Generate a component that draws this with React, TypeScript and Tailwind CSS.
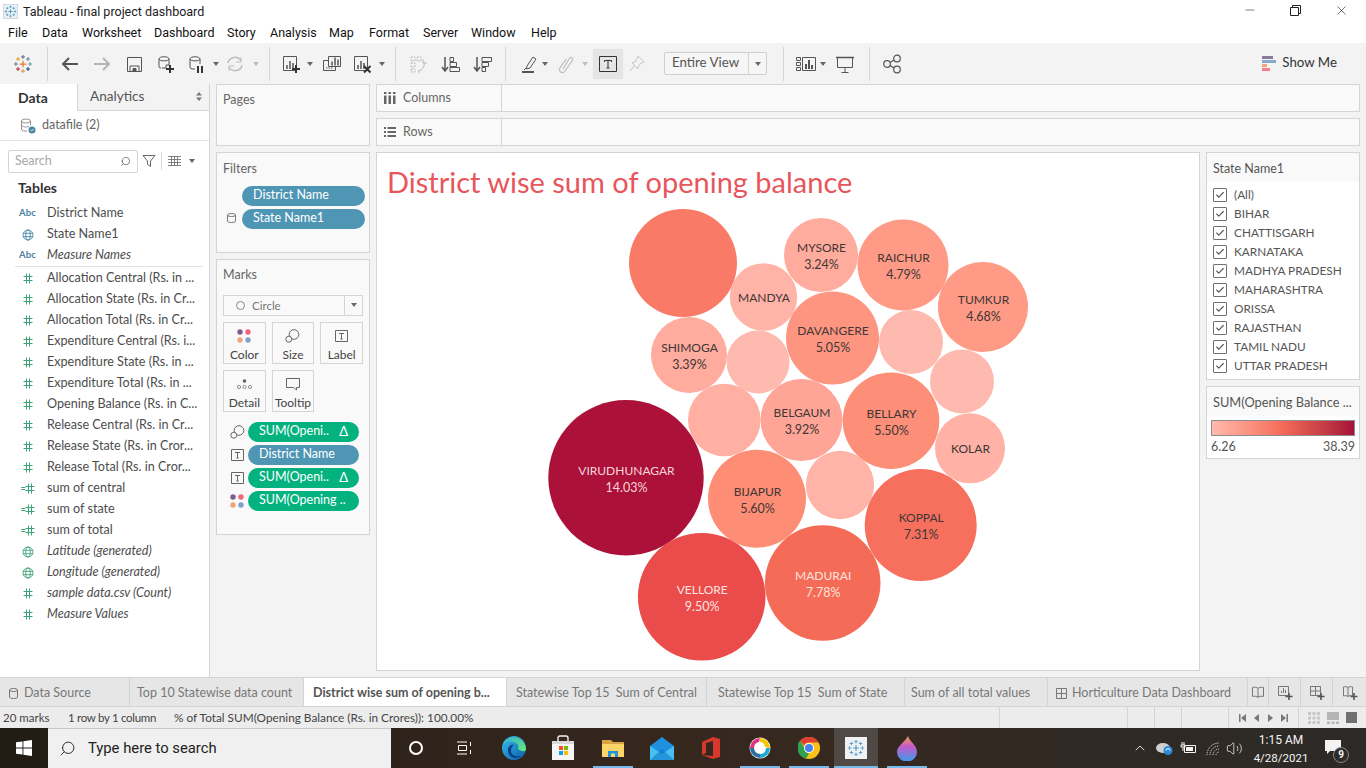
import type { ReactNode } from 'react';
import { Check, ChevronUp, Search, Volume2, X, Minus } from 'lucide-react';

type Bubble = { cx: number; cy: number; r: number; fill: string; name?: string; pct?: string; ink?: string };

const bubbles: Bubble[] = [
  { cx: 683, cy: 263, r: 54, fill: '#f97a66' },
  { cx: 821, cy: 255, r: 37, fill: '#ffab9d', name: 'MYSORE', pct: '3.24%' },
  { cx: 903, cy: 265, r: 45.5, fill: '#fe9a85', name: 'RAICHUR', pct: '4.79%' },
  { cx: 983, cy: 307, r: 45, fill: '#fe9a85', name: 'TUMKUR', pct: '4.68%' },
  { cx: 763.5, cy: 297, r: 33.7, fill: '#ffb4a7', name: 'MANDYA' },
  { cx: 832.5, cy: 338, r: 46.5, fill: '#fe9580', name: 'DAVANGERE', pct: '5.05%' },
  { cx: 911, cy: 342, r: 32, fill: '#ffbaaf' },
  { cx: 689, cy: 355, r: 38, fill: '#ffab9d', name: 'SHIMOGA', pct: '3.39%' },
  { cx: 758, cy: 362, r: 31.5, fill: '#ffbaaf' },
  { cx: 962, cy: 381.5, r: 32, fill: '#ffbaaf' },
  { cx: 626, cy: 477.7, r: 77.7, fill: '#ab1139', name: 'VIRUDHUNAGAR', pct: '14.03%', ink: '#f6d5da' },
  { cx: 724.3, cy: 420, r: 36.3, fill: '#ffb0a2' },
  { cx: 801.5, cy: 420, r: 41, fill: '#fea597', name: 'BELGAUM', pct: '3.92%' },
  { cx: 891, cy: 420.7, r: 48.3, fill: '#fd8e78', name: 'BELLARY', pct: '5.50%' },
  { cx: 970, cy: 448.3, r: 35, fill: '#ffb2a5', name: 'KOLAR' },
  { cx: 757, cy: 498.7, r: 49, fill: '#fd8d75', name: 'BIJAPUR', pct: '5.60%' },
  { cx: 840, cy: 485, r: 34.2, fill: '#ffb4a7' },
  { cx: 920.7, cy: 525, r: 56, fill: '#f6705d', name: 'KOPPAL', pct: '7.31%' },
  { cx: 822.7, cy: 583, r: 57.8, fill: '#f46b58', name: 'MADURAI', pct: '7.78%', ink: '#ffe3dd' },
  { cx: 701.7, cy: 596.8, r: 63.8, fill: '#e94c4a', name: 'VELLORE', pct: '9.50%', ink: '#ffe3e0' },
];

const fields: { label: string; kind: 'abc' | 'globe' | 'hash' | 'calc' | 'gglobe'; italic?: boolean; rule?: boolean }[] = [
  { label: 'District Name', kind: 'abc' },
  { label: 'State Name1', kind: 'globe' },
  { label: 'Measure Names', kind: 'abc', italic: true, rule: true },
  { label: 'Allocation Central (Rs. in ...', kind: 'hash' },
  { label: 'Allocation State (Rs. in Cr...', kind: 'hash' },
  { label: 'Allocation Total (Rs. in Cr...', kind: 'hash' },
  { label: 'Expenditure Central (Rs. i...', kind: 'hash' },
  { label: 'Expenditure State (Rs. in ...', kind: 'hash' },
  { label: 'Expenditure Total (Rs. in ...', kind: 'hash' },
  { label: 'Opening Balance (Rs. in C...', kind: 'hash' },
  { label: 'Release Central (Rs. in Cr...', kind: 'hash' },
  { label: 'Release State (Rs. in Cror...', kind: 'hash' },
  { label: 'Release Total (Rs. in Cror...', kind: 'hash' },
  { label: 'sum of central', kind: 'calc' },
  { label: 'sum of state', kind: 'calc' },
  { label: 'sum of total', kind: 'calc' },
  { label: 'Latitude (generated)', kind: 'gglobe', italic: true },
  { label: 'Longitude (generated)', kind: 'gglobe', italic: true },
  { label: 'sample data.csv (Count)', kind: 'hash', italic: true },
  { label: 'Measure Values', kind: 'hash', italic: true },
];

const states = ['(All)', 'BIHAR', 'CHATTISGARH', 'KARNATAKA', 'MADHYA PRADESH', 'MAHARASHTRA', 'ORISSA', 'RAJASTHAN', 'TAMIL NADU', 'UTTAR PRADESH'];

const menus = [
  { t: 'File', c: 'w-[34px]' },
  { t: 'Data', c: 'w-[40px]' },
  { t: 'Worksheet', c: 'w-[72px]' },
  { t: 'Dashboard', c: 'w-[73px]' },
  { t: 'Story', c: 'w-[43px]' },
  { t: 'Analysis', c: 'w-[59px]' },
  { t: 'Map', c: 'w-[40px]' },
  { t: 'Format', c: 'w-[54px]' },
  { t: 'Server', c: 'w-[48px]' },
  { t: 'Window', c: 'w-[60px]' },
  { t: 'Help', c: 'w-[40px]' },
];

function Plus({ x, y, s, c, w = 1 }: { x: number; y: number; s: number; c: string; w?: number }) {
  return <path d={`M${x - s} ${y}H${x + s}M${x} ${y - s}V${y + s}`} stroke={c} strokeWidth={w} fill="none" />;
}

function TableauMark({ size = 20, mono }: { size?: number; mono?: string }) {
  const c = (v: string) => mono ?? v;
  return (
    <svg width={size} height={size} viewBox="0 0 24 24" className="shrink-0">
      <Plus x={12} y={12} s={4} c={c('#e8762b')} w={1.5} />
      <Plus x={12} y={3.5} s={2.4} c={c('#5b6591')} w={1.2} />
      <Plus x={12} y={20.5} s={2.4} c={c('#eb912b')} w={1.2} />
      <Plus x={3.5} y={12} s={2.4} c={c('#59879b')} w={1.2} />
      <Plus x={20.5} y={12} s={2.4} c={c('#7099a6')} w={1.2} />
      <Plus x={6} y={6} s={2.4} c={c('#e8962b')} w={1.2} />
      <Plus x={18} y={6} s={2.4} c={c('#59879b')} w={1.2} />
      <Plus x={6} y={18} s={2.4} c={c('#c72035')} w={1.2} />
      <Plus x={18} y={18} s={2.4} c={c('#1f447e')} w={1.2} />
    </svg>
  );
}

function Ico({ children, className = '', w = 20, h = 20 }: { children: ReactNode; className?: string; w?: number; h?: number }) {
  return (
    <svg width={w} height={h} viewBox={`0 0 ${w} ${h}`} fill="none" stroke="currentColor" strokeWidth={1} className={`shrink-0 ${className}`}>
      {children}
    </svg>
  );
}

function Caret({ className = '', dim }: { className?: string; dim?: boolean }) {
  return (
    <svg width={6} height={4} viewBox="0 0 6 4" className={`shrink-0 ${className}`}>
      <path d="M0 0H6L3 4Z" fill={dim ? '#bdbdbd' : '#666666'} />
    </svg>
  );
}

function Sep({ className }: { className: string }) {
  return <div className={`w-px h-[34px] bg-[#d6d6d6] shrink-0 ${className}`} />;
}

function BarsGlyph({ x, y }: { x: number; y: number }) {
  return <path d={`M${x} ${y + 8}V${y + 4}M${x + 3} ${y + 8}V${y}M${x + 6} ${y + 8}V${y + 2}`} strokeWidth={1.5} />;
}

function Toolbar() {
  return (
    <div className="h-[41px] bg-[#f3f3f3] flex items-center pl-[13px] text-[#555555]">
      <TableauMark />
      <Sep className="ml-[14px]" />
      <Ico className="ml-[12px]"><path d="M18 10H3M9 4L3 10L9 16" strokeWidth={2} /></Ico>
      <Ico className="ml-[12px] text-[#b5b5b5]"><path d="M2 10H17M11 4L17 10L11 16" strokeWidth={2} /></Ico>
      <Ico className="ml-[12px]"><path d="M3.5 3.5H17.5V17.5H3.5Z" /><path d="M6 17V12H15V17" /><path d="M9 14.5H12V17H9Z" fill="currentColor" /></Ico>
      <Ico className="ml-[11px]"><path d="M4 5C4 2 14 2 14 5V11H11V14H7M4 5V13Q4 14 6 14M4 5C4 7.5 14 7.5 14 5" /><path d="M15 11V19M11 15H19" stroke="#333333" strokeWidth={2} /></Ico>
      <Ico className="ml-[11px]"><path d="M4 5C4 2 14 2 14 5V10M4 5V13Q4 15 7 15H9M4 5C4 7.5 14 7.5 14 5" /><path d="M12 12V19M16 12V19" stroke="#333333" strokeWidth={2} /></Ico>
      <Caret className="ml-[7px]" />
      <Ico className="ml-[6px] text-[#bdbdbd]"><path d="M3 9A7 7 0 0 1 16 7M17 11A7 7 0 0 1 4 13" strokeWidth={1.5} /><path d="M16 3V8H11M4 17V12H9" strokeWidth={1} /></Ico>
      <Caret className="ml-[8px]" dim />
      <Sep className="ml-[10px]" />
      <Ico className="ml-[11px]"><path d="M2.5 2.5H15.5V16.5H2.5Z" /><BarsGlyph x={6} y={7} /><path d="M15 11V19M11 15H19" stroke="#333333" strokeWidth={2} /></Ico>
      <Caret className="ml-[6px]" />
      <Ico className="ml-[9px]"><path d="M6.5 2.5H18.5V12.5H6.5Z" /><path d="M6 6.5H1.5V16.5H13.5V13" /><BarsGlyph x={10} y={3.5} /><path d="M4 14H11" strokeDasharray="1.5 1" /></Ico>
      <Ico className="ml-[10px]"><path d="M2.5 2.5H15.5V16.5H2.5Z" /><BarsGlyph x={6} y={7} /><path d="M12 12L18.5 18.5M18.5 12L12 18.5" stroke="#333333" strokeWidth={2} /></Ico>
      <Caret className="ml-[7px]" />
      <Sep className="ml-[10px]" />
      <Ico className="ml-[12px] text-[#bdbdbd]"><path d="M3 3H7V7H3ZM9 3H13V7H9ZM3 9H7V13H3ZM3 15H7V18H3ZM10 18H13" strokeDasharray="2 1" /><path d="M16 8A7 7 0 0 1 10 17M15 5V9H19" /></Ico>
      <Ico className="ml-[12px]"><path d="M5 3V16M2 13L5 17L8 13" strokeWidth={1.5} /><path d="M10 3.5H13.5V7.5H10ZM10 8.5H16.5V12.5H10ZM10 13.5H19.5V17.5H10Z" /></Ico>
      <Ico className="ml-[12px]"><path d="M5 3V16M2 13L5 17L8 13" strokeWidth={1.5} /><path d="M10 3.5H19.5V7.5H10ZM10 8.5H16.5V12.5H10ZM10 13.5H13.5V17.5H10Z" /></Ico>
      <Sep className="ml-[13px]" />
      <Ico className="ml-[12px]"><path d="M9 12L15 3L18 5L12 14L8.5 15Z" /><path d="M4 18H16" strokeWidth={2} /><path d="M8 14L6 16" /></Ico>
      <Caret className="ml-[4px]" />
      <Ico className="ml-[7px] text-[#bdbdbd]"><path d="M8 15L14 5C16 2 19 4 17 7L10 17C8 20 3 18 5 14L11 5" strokeWidth={1.2} /></Ico>
      <Caret className="ml-[7px]" dim />
      <div className="ml-[5px] w-[30px] h-[30px] bg-[#e5e5e5] flex items-center justify-center shrink-0">
        <svg width={18} height={16} viewBox="0 0 18 16" className="text-[#333333]" fill="none" stroke="currentColor">
          <path d="M.5.5H17.5V15.5H.5Z" />
          <path d="M5.5 4.5H12.5M9 4.5V12M7.5 12H10.5M5.5 4.5V6M12.5 4.5V6" />
        </svg>
      </div>
      <Ico className="ml-[4px] text-[#c4c4c4]"><path d="M11 2L17 8L14 9L11 13L11 15L5 9L8 8L10 5Z" /><path d="M7 12L3 17" /></Ico>
      <div className="ml-[17px] w-[103px] h-[23px] flex items-center bg-[#f6f6f6] border border-[#cfcfcf] rounded-[2px] shrink-0 text-[13.3px] text-[#555555]">
        <span className="flex-1 pl-[7px] pb-[1px]">Entire View</span>
        <div className="w-[18px] h-full border-l border-[#d4d4d4] flex items-center justify-center"><Caret /></div>
      </div>
      <Sep className="ml-[16px]" />
      <Ico className="ml-[12px]"><path d="M.5 3.5H4.5V6.5H.5ZM.5 8.5H4.5V11.5H.5ZM.5 13.5H4.5V16.5H.5Z" /><path d="M6.5 3.5H19.5V16.5H6.5Z" /><path d="M10 15V10M13 15V6M16 15V11" strokeWidth={2} /></Ico>
      <Caret className="ml-[4px]" />
      <Ico className="ml-[9px]"><path d="M1 3.5H19" strokeWidth={1.5} /><path d="M2.5 3.5V13.5H17.5V3.5" /><path d="M10 14V18M6.5 18.5H13.5" /></Ico>
      <Sep className="ml-[14px]" />
      <Ico className="ml-[12px]"><circle cx={5} cy={10} r={3.3} strokeWidth={1.2} /><circle cx={15} cy={4.5} r={3.3} strokeWidth={1.2} /><circle cx={15} cy={15.5} r={3.3} strokeWidth={1.2} /><path d="M8 8.5L12 6M8 11.5L12 14" strokeWidth={1.2} /></Ico>
      <div className="ml-auto pr-[29px] flex items-center gap-[6px] text-[13.3px] text-[#333333]">
        <svg width={14} height={16} viewBox="0 0 14 16" className="shrink-0">
          <rect x="0" y="0" width="11" height="3" fill="#8b7aa0" />
          <rect x="0" y="4" width="14" height="3" fill="#88a9d0" />
          <rect x="0" y="8" width="5" height="3" fill="#f5a37c" />
          <rect x="0" y="12" width="8" height="3" fill="#f77d8a" />
        </svg>
        <span className="pb-[1px]">Show Me</span>
      </div>
    </div>
  );
}

function FieldIcon({ kind }: { kind: string }) {
  if (kind === 'abc') return <span className="text-[9.5px] font-bold text-[#4a7fa0] tracking-[0.2px]">Abc</span>;
  if (kind === 'globe' || kind === 'gglobe') {
    const color = kind === 'globe' ? 'text-[#4a85a8]' : 'text-[#3fa37a]';
    return (
      <svg width={12} height={12} viewBox="0 0 12 12" fill="none" stroke="currentColor" strokeWidth={0.9} className={color}>
        <circle cx={6} cy={6} r={5} />
        <ellipse cx={6} cy={6} rx={2.2} ry={5} />
        <path d="M1 4.3H11M1 7.7H11" />
      </svg>
    );
  }
  return (
    <span className="flex items-center">
      {kind === 'calc' && <span className="text-[#3fa37a] text-[9px] leading-none font-bold -mr-px">=</span>}
      <svg width={10} height={11} viewBox="0 0 10 11" fill="none" stroke="#3fa37a" strokeWidth={1}>
        <path d="M3.5 0.5V10.5M6.5 0.5V10.5M0.5 3.5H9.5M0.5 7.5H9.5" />
      </svg>
    </span>
  );
}

function DataPane() {
  return (
    <aside className="w-[210px] shrink-0 bg-white border-r border-[#d4d4d4] flex flex-col">
      <div className="h-[27px] flex text-[14px]">
        <div className="w-[77px] flex items-center pl-[18px] pb-[1px] font-bold text-[#333333]">Data</div>
        <div className="flex-1 flex items-center pl-[12px] pb-[1px] bg-[#f3f3f3] border-l border-b border-[#d4d4d4] text-[13.6px] text-[#555555]">
          Analytics
          <svg width={6} height={9} viewBox="0 0 6 9" className="ml-auto mr-[7px]"><path d="M0 3.5L3 0L6 3.5ZM0 5.5L3 9L6 5.5Z" fill="#777777" /></svg>
        </div>
      </div>
      <div className="h-[30px] flex items-center pl-[20px] gap-[6px] border-b border-[#e4e4e4] text-[12.5px] text-[#666666]">
        <svg width={16} height={16} viewBox="0 0 16 16" fill="none" stroke="#777777" strokeWidth={0.8}>
          <ellipse cx={6} cy={3} rx={4.5} ry={2} />
          <path d="M1.5 3V11C1.5 13 5 13.5 7 13M10.5 3V7M1.5 7C2 9 6 9.5 9 8.5" />
          <circle cx={12} cy={12} r={3.5} fill="#4a85a8" stroke="none" />
          <path d="M10.5 12L11.6 13L13.5 11" stroke="#ffffff" />
        </svg>
        datafile (2)
      </div>
      <div className="mt-[8px] h-[24px] flex items-center pl-[8px]">
        <div className="w-[130px] h-[23px] bg-white border border-[#d4d4d4] rounded-[2px] flex items-center pl-[6px] pr-[6px] text-[12.5px] text-[#a8a8a8]">
          <span className="flex-1">Search</span>
          <Search size={11} className="text-[#555555] -scale-x-100" strokeWidth={1.5} />
        </div>
        <svg width={14} height={14} viewBox="0 0 14 14" fill="none" stroke="#666666" className="ml-[4px]"><path d="M1 1.5H13L8.5 7V12.5L5.5 10.5V7Z" /></svg>
        <div className="w-px h-[18px] bg-[#d8d8d8] ml-[5px]" />
        <svg width={13} height={10} viewBox="0 0 13 10" className="ml-[6px]" fill="none" stroke="#666666" strokeWidth={0.8}>
          <path d="M0 .5H13M0 3.5H13M0 6.5H13M0 9.5H13M3.5 0V10M6.5 0V10M9.5 0V10" />
        </svg>
        <Caret className="ml-[8px]" />
      </div>
      <div className="mt-[4px] pl-[18px] text-[14px] font-bold text-[#333333] h-[21px] flex items-center">Tables</div>
      <div className="mt-[5px]">
        {fields.map((f) => (
          <div key={f.label} className={f.rule ? 'mb-[1px] border-b border-[#e0e0e0] ml-[15px] mr-[6px]' : ''}>
            <div className={`h-[21px] flex items-center text-[12.6px] text-[#4d4d4d] whitespace-nowrap ${f.rule ? '-ml-[15px]' : ''} ${f.italic ? 'italic' : ''}`}>
              <span className="w-[47px] pl-[19px] pr-[11px] flex justify-center items-center shrink-0 not-italic"><FieldIcon kind={f.kind} /></span>
              {f.label}
            </div>
          </div>
        ))}
      </div>
    </aside>
  );
}

function Pill({ children, tone, delta, className = '' }: { children: ReactNode; tone: 'blue' | 'green'; delta?: boolean; className?: string }) {
  return (
    <div className={`h-[20px] rounded-full flex items-center pl-[11px] pr-[11px] text-[12.5px] text-white whitespace-nowrap ${tone === 'blue' ? 'bg-[#4f96b4]' : 'bg-[#03b27e]'} ${className}`}>
      <span className="flex-1">{children}</span>
      {delta && <span className="text-[13px] leading-none">Δ</span>}
    </div>
  );
}

function MarkBtn({ label, icon }: { label: string; icon: ReactNode }) {
  return (
    <div className="h-[42px] border border-[#d4d4d4] bg-[#f9f9f9] flex flex-col items-center justify-between pt-[5px] pb-[1px] text-[12px] leading-[14px] text-[#444444]">
      <div className="h-[17px] flex items-center">{icon}</div>
      {label}
    </div>
  );
}

function ColorDots() {
  return (
    <svg width={14} height={14} viewBox="0 0 14 14" className="shrink-0">
      <circle cx={3} cy={3} r={2.7} fill="#7b5e8d" />
      <circle cx={11} cy={3} r={2.7} fill="#f2657a" />
      <circle cx={3} cy={11} r={2.7} fill="#f3a37a" />
      <circle cx={11} cy={11} r={2.7} fill="#7d9fcc" />
    </svg>
  );
}

function SizeIcon() {
  return (
    <svg width={15} height={14} viewBox="0 0 15 14" fill="none" stroke="#666666" className="shrink-0">
      <circle cx={9} cy={5.5} r={4.8} />
      <circle cx={3.8} cy={10.2} r={3} fill="#f9f9f9" />
    </svg>
  );
}

function TextIcon() {
  return (
    <svg width={13} height={12} viewBox="0 0 13 12" fill="none" stroke="#666666" className="shrink-0">
      <path d="M.5.5H12.5V11.5H.5Z" />
      <path d="M4 3.5H9M6.5 3.5V9M5.3 9H7.7" />
    </svg>
  );
}

function SideCards() {
  return (
    <div className="w-[154px] shrink-0 ml-[6px] flex flex-col gap-[6px] text-[12.5px] text-[#666666]">
      <div className="h-[62px] border border-[#d4d4d4] bg-[#f9f9f9] pl-[6px] pt-[6px]">Pages</div>
      <div className="h-[101px] border border-[#d4d4d4] bg-[#f9f9f9] pt-[7px] relative">
        <div className="pl-[6px]">Filters</div>
        <div className="mt-[7px] flex flex-col gap-[3px] pl-[25px] pr-[4px]">
          <Pill tone="blue">District Name</Pill>
          <Pill tone="blue">State Name1</Pill>
        </div>
        <svg width={9} height={10} viewBox="0 0 9 10" fill="none" stroke="#777777" className="absolute left-[10px] top-[60px]">
          <path d="M.5 2C.5 0 8.5 0 8.5 2V8C8.5 10 .5 10 .5 8ZM.5 2C.5 4 8.5 4 8.5 2" />
        </svg>
      </div>
      <div className="h-[276px] border border-[#d4d4d4] bg-[#f9f9f9] pt-[6px]">
        <div className="pl-[6px]">Marks</div>
        <div className="mt-[10px] mx-[6px] h-[21px] border border-[#d4d4d4] flex items-center text-[11.5px] text-[#777777]">
          <span className="w-[9px] h-[9px] rounded-full border border-[#888888] ml-[12px] mr-[7px]" />
          <span className="flex-1">Circle</span>
          <div className="w-[18px] h-full border-l border-[#d4d4d4] flex items-center justify-center"><Caret /></div>
        </div>
        <div className="mt-[6px] mx-[6px] grid grid-cols-3 gap-x-[6px] gap-y-[6px]">
          <MarkBtn label="Color" icon={<ColorDots />} />
          <MarkBtn label="Size" icon={<SizeIcon />} />
          <MarkBtn label="Label" icon={<TextIcon />} />
          <MarkBtn
            label="Detail"
            icon={
              <svg width={15} height={10} viewBox="0 0 15 10" fill="none" stroke="#777777" strokeWidth={0.8}>
                <circle cx={7.5} cy={2} r={1.8} fill="#666666" stroke="none" />
                <circle cx={2} cy={8} r={1.6} />
                <circle cx={7.5} cy={8} r={1.6} />
                <circle cx={13} cy={8} r={1.6} />
              </svg>
            }
          />
          <MarkBtn
            label="Tooltip"
            icon={
              <svg width={14} height={14} viewBox="0 0 14 14" fill="none" stroke="#666666"><path d="M.5 1.5H13.5V10.5H10.5V13L7.5 10.5H.5Z" /></svg>
            }
          />
        </div>
        <div className="mt-[10px] flex flex-col gap-[3px]">
          {[
            { icon: <SizeIcon />, label: 'SUM(Openi..', tone: 'green' as const, delta: true },
            { icon: <TextIcon />, label: 'District Name', tone: 'blue' as const },
            { icon: <TextIcon />, label: 'SUM(Openi..', tone: 'green' as const, delta: true },
            { icon: <ColorDots />, label: 'SUM(Opening ..', tone: 'green' as const },
          ].map((p, i) => (
            <div key={i} className="flex items-center pl-[13px] pr-[10px] gap-[4px]">
              <span className="w-[14px] flex justify-center">{p.icon}</span>
              <Pill tone={p.tone} delta={p.delta} className="flex-1">{p.label}</Pill>
            </div>
          ))}
        </div>
      </div>
    </div>
  );
}

function Shelf({ label, icon }: { label: string; icon: ReactNode }) {
  return (
    <div className="h-[28px] border border-[#d4d4d4] bg-[#f9f9f9] flex items-center text-[12.5px] text-[#666666]">
      <div className="w-[125px] h-full border-r border-[#d4d4d4] flex items-center pl-[7px] gap-[7px] shrink-0">
        {icon}
        {label}
      </div>
    </div>
  );
}

function Viz() {
  return (
    <div className="w-[824px] h-[519px] shrink-0 border border-[#d4d4d4] bg-white flex flex-col overflow-hidden">
      <div className="h-[47px] pl-[10px] pt-[12px] text-[29px] leading-[34px] text-[#e8565b] whitespace-nowrap">District wise sum of opening balance</div>
      <svg width={822} height={470} viewBox="377 200 822 470" className="block">
        {bubbles.map((b, i) => (
          <g key={i}>
            <circle cx={b.cx} cy={b.cy} r={b.r} fill={b.fill} />
            {b.name && (
              <text x={b.cx + 0.5} y={b.cy + (b.pct ? -3 : 4.5)} textAnchor="middle" fontSize={12} fill={b.ink ?? '#3f3636'}>
                {b.name}
              </text>
            )}
            {b.pct && (
              <text x={b.cx + 0.5} y={b.cy + 14} textAnchor="middle" fontSize={12.5} fill={b.ink ?? '#3f3636'}>
                {b.pct}
              </text>
            )}
          </g>
        ))}
      </svg>
    </div>
  );
}

function RightCards() {
  return (
    <div className="w-[154px] shrink-0 ml-[6px] flex flex-col gap-[6px]">
      <div className="h-[228px] border border-[#d4d4d4] bg-white">
        <div className="h-[29px] bg-[#f9f9f9] flex items-center pl-[6px] pt-[3px] text-[12.5px] text-[#555555]">State Name1</div>
        <div className="pl-[6px] pt-[3px]">
          {states.map((s) => (
            <div key={s} className="h-[19px] flex items-center gap-[7px] text-[11.8px] text-[#555555] whitespace-nowrap">
              <span className="w-[14px] h-[14px] border border-[#707070] rounded-[1px] flex items-center justify-center shrink-0">
                <Check size={10} strokeWidth={2.6} className="text-[#555555]" />
              </span>
              {s}
            </div>
          ))}
        </div>
      </div>
      <div className="h-[73px] border border-[#d4d4d4] bg-white">
        <div className="h-[29px] bg-[#f9f9f9] flex items-center pl-[6px] pt-[3px] text-[12.8px] text-[#555555] whitespace-nowrap">SUM(Opening Balance ...</div>
        <div className="mx-[4px] mt-[4px] h-[16px] border border-[#8d8d8d] bg-gradient-to-r from-[#ffb9ae] via-[#f46b58] to-[#a50e38]" />
        <div className="mx-[4px] mt-[2px] flex justify-between text-[12.5px] leading-[17px] text-[#555555]">
          <span>6.26</span>
          <span>38.39</span>
        </div>
      </div>
    </div>
  );
}

const tabs = [
  { t: 'Top 10 Statewise data count', c: 'w-[174px] pl-[7px]' },
  { t: 'District wise sum of opening b...', c: 'w-[203px] pl-[9px] bg-white font-bold text-[#555555]' },
  { t: 'Statewise Top 15  Sum of Central', c: 'w-[200px] pl-[9px]' },
  { t: 'Statewise Top 15  Sum of State', c: 'w-[198px] pl-[11px]' },
  { t: 'Sum of all total values', c: 'w-[143px] pl-[6px]' },
];

function TabBar() {
  return (
    <div className="h-[30px] bg-[#e6e6e6] border-t border-b border-[#d4d4d4] flex text-[12.5px] text-[#777777] whitespace-nowrap">
      <div className="w-[130px] border-r border-[#d4d4d4] flex items-center pl-[9px] pt-[2px] gap-[6px]">
        <svg width={9} height={11} viewBox="0 0 9 11" fill="none" stroke="#777777"><path d="M.5 2C.5 0 8.5 0 8.5 2V9C8.5 11 .5 11 .5 9ZM.5 2C.5 4 8.5 4 8.5 2" /></svg>
        Data Source
      </div>
      {tabs.map((t) => (
        <div key={t.t} className={`${t.c} border-r border-[#d4d4d4] flex items-center pt-[2px] whitespace-pre`}>{t.t}</div>
      ))}
      <div className="w-[200px] border-r border-[#d4d4d4] flex items-center pl-[8px] pt-[2px] gap-[5px]">
        <svg width={11} height={11} viewBox="0 0 11 11" fill="none" stroke="#777777"><path d="M.5.5H10.5V10.5H.5ZM5.5.5V10.5M.5 5.5H10.5" /></svg>
        Horticulture Data Dashboard
      </div>
      <div className="w-[21px] border-r border-[#d4d4d4] flex items-center justify-center">
        <svg width={12} height={12} viewBox="0 0 12 12" fill="none" stroke="#777777"><path d="M6 2.5C5 1 2 1 .5 1.5V10.5C2 10 5 10 6 11.5C7 10 10 10 11.5 10.5V1.5C10 1 7 1 6 2.5V11.5" /></svg>
      </div>
      <div className="w-[32px] border-r border-[#d4d4d4] flex items-center justify-center text-[#777777]">
        <Ico w={16} h={16}><path d="M1.5 2.5H11.5V11.5H1.5Z" /><path d="M4.5 9V7M6.5 9V4M8.5 9V6" /><path d="M12 9V16M8.5 12.5H15.5" stroke="#555555" strokeWidth={1.6} /></Ico>
      </div>
      <div className="w-[32px] border-r border-[#d4d4d4] flex items-center justify-center text-[#777777]">
        <Ico w={16} h={16}><path d="M1.5 2.5H11.5V11.5H1.5ZM6.5 2.5V11.5M1.5 7H11.5" /><path d="M12 9V16M8.5 12.5H15.5" stroke="#555555" strokeWidth={1.6} /></Ico>
      </div>
      <div className="flex-1 flex items-center justify-center text-[#777777]">
        <Ico w={16} h={16}><path d="M6 3.5C5 2.5 3 2.5 1.5 3V12C3 11.5 5 11.5 6 12.5C7 11.5 9 11.5 10.5 12V3C9 2.5 7 2.5 6 3.5V12.5" /><path d="M12 9V16M8.5 12.5H15.5" stroke="#555555" strokeWidth={1.6} /></Ico>
      </div>
    </div>
  );
}

function StatusBar() {
  return (
    <div className="h-[21px] bg-[#ececec] flex items-center text-[11.5px] text-[#444444] whitespace-nowrap">
      <span className="ml-[3px] w-[65px]">20 marks</span>
      <span className="w-[106px] tracking-[-0.3px]">1 row by 1 column</span>
      <span className="w-[825px] text-[11.8px]">% of Total SUM(Opening Balance (Rs. in Crores)): 100.00%</span>
      <div className="w-[128px] h-full border-l border-[#d4d4d4]" />
      <div className="w-[27px] h-full border-l border-[#d4d4d4]" />
      <div className="w-[27px] h-full border-l border-[#d4d4d4]" />
      <div className="w-[47px] h-full border-l border-[#d4d4d4]" />
      <div className="w-[70px] h-full border-l border-[#d4d4d4] flex items-center justify-around px-[6px]">
        <svg width={7} height={8} viewBox="0 0 7 8" fill="#777777"><path d="M0 0H1.5V8H0ZM7 0V8L2 4Z" /></svg>
        <svg width={5} height={8} viewBox="0 0 5 8" fill="#777777"><path d="M5 0V8L0 4Z" /></svg>
        <svg width={5} height={8} viewBox="0 0 5 8" fill="#777777"><path d="M0 0V8L5 4Z" /></svg>
        <svg width={7} height={8} viewBox="0 0 7 8" fill="#777777"><path d="M7 0H5.5V8H7ZM0 0V8L5 4Z" /></svg>
      </div>
      <div className="flex-1 h-full border-l border-[#d4d4d4] flex items-center justify-around px-[6px]">
        <svg width={12} height={12} viewBox="0 0 12 12" fill="#c8c8c8"><path d="M0 0H3V3H0ZM4.5 0H7.5V3H4.5ZM9 0H12V3H9ZM0 4.5H3V7.5H0ZM4.5 4.5H7.5V7.5H4.5ZM9 4.5H12V7.5H9ZM0 9H3V12H0ZM4.5 9H7.5V12H4.5ZM9 9H12V12H9Z" /></svg>
        <svg width={12} height={12} viewBox="0 0 12 12" fill="#b5b5b5"><path d="M0 0H12V8H0ZM0 9.5H3V12H0ZM4.5 9.5H7.5V12H4.5ZM9 9.5H12V12H9Z" /></svg>
        <div className="w-[11px] h-[11px] bg-[#6f6f6f]" />
      </div>
    </div>
  );
}

function TaskSlot({ children, line, active, className = 'w-[48px]' }: { children: ReactNode; line?: boolean; active?: boolean; className?: string }) {
  return (
    <div className={`h-full flex items-center justify-center relative shrink-0 ${active ? 'bg-[#4f4a46]' : ''} ${className}`}>
      {children}
      {line && <div className={`absolute bottom-0 h-[2px] bg-[#76b9ed] ${active ? 'inset-x-0' : 'left-[4px] right-[4px]'}`} />}
    </div>
  );
}

function TaskBar() {
  return (
    <div className="h-[40px] bg-gradient-to-r from-[#221c16] via-[#37281e] to-[#2c2a27] flex items-center text-white font-['Roboto',sans-serif]">
      <div className="w-[48px] h-full flex items-center justify-center">
        <svg width={16} height={16} viewBox="0 0 16 16" fill="#ffffff"><path d="M0 2.3L6.5 1.4V7.5H0ZM7.4 1.3L16 0V7.5H7.4ZM0 8.5H6.5V14.6L0 13.7ZM7.4 8.5H16V16L7.4 14.7Z" /></svg>
      </div>
      <div className="w-[343px] h-full bg-[#f0f0f0] border-t border-[#c9c9c9] flex items-center pl-[11px] gap-[12px] text-[14.8px] text-[#222222]">
        <Search size={17} className="-scale-x-100" strokeWidth={1.3} />
        Type here to search
      </div>
      <TaskSlot className="w-[49px]"><span className="w-[14px] h-[14px] rounded-full border-2 border-white" /></TaskSlot>
      <TaskSlot>
        <svg width={16} height={14} viewBox="0 0 16 14" fill="none" stroke="#ffffff"><path d="M1 1H11M1 13H11M2.5 4.5H10.5V9.5H2.5ZM14.5 1V5M14.5 9V13" /></svg>
      </TaskSlot>
      <TaskSlot className="w-[52px]">
        <svg width={24} height={24} viewBox="0 0 24 24">
          <defs>
            <linearGradient id="edgeA" x1="0" y1="0" x2="1" y2="1"><stop offset="0" stopColor="#35c1f1" /><stop offset="1" stopColor="#0c59a4" /></linearGradient>
            <linearGradient id="edgeB" x1="0" y1="0" x2="1" y2="1"><stop offset="0" stopColor="#36b1d9" /><stop offset="1" stopColor="#66eb6e" /></linearGradient>
          </defs>
          <circle cx={12} cy={12} r={12} fill="url(#edgeA)" />
          <path d="M24 13C24 7 18 1 12 1C8 1 3 3 1 9C4 5 9 5 12 6C17 8 17 11 16 13C18 15 24 17 24 13Z" fill="url(#edgeB)" />
          <path d="M9 15C9 19 13 21 19 20C15 24 6 22 6 14C6 10 10 8 12 9C10 10 9 12 9 15Z" fill="#0b3f85" />
        </svg>
      </TaskSlot>
      <TaskSlot className="w-[46px]">
        <svg width={24} height={26} viewBox="0 0 24 26">
          <path d="M7 7V3Q7 1 9 1H15Q17 1 17 3V7" fill="none" stroke="#f3f3f3" strokeWidth={1.4} />
          <path d="M1 6H23V25H1Z" fill="#f5f5f5" />
          <path d="M1 6H23V9H1Z" fill="#d9d9d9" />
          <rect x="8" y="11" width="4" height="4" fill="#f25022" />
          <rect x="13" y="11" width="4" height="4" fill="#7fba00" />
          <rect x="8" y="16" width="4" height="4" fill="#00a4ef" />
          <rect x="13" y="16" width="4" height="4" fill="#ffb900" />
        </svg>
      </TaskSlot>
      <TaskSlot line className="w-[48px] ml-[3px]">
        <svg width={22} height={18} viewBox="0 0 22 18">
          <path d="M0 1H9L11 3H22V18H0Z" fill="#d9a441" />
          <path d="M0 5H22V18H0Z" fill="#fbd568" />
          <path d="M6 12H16V18H13V14.5H9V18H6Z" fill="#1f93dd" />
        </svg>
      </TaskSlot>
      <TaskSlot className="w-[48px] ml-px">
        <svg width={24} height={23} viewBox="0 0 24 23">
          <path d="M0 9L12 0L24 9V23H0Z" fill="#1f8fe0" />
          <path d="M0 9L12 17L24 9V23H0Z" fill="#46c0f2" />
          <path d="M0 23L12 12L24 23Z" fill="#0f76c6" opacity="0.6" />
        </svg>
      </TaskSlot>
      <TaskSlot className="w-[48px] ml-px">
        <svg width={18} height={22} viewBox="0 0 18 22">
          <path d="M0 5L11 0L18 2V20L11 22L0 18L11 19V4L4 6V16L0 18Z" fill="#d6392b" />
        </svg>
      </TaskSlot>
      <TaskSlot line className="w-[48px] ml-px">
        <svg width={22} height={22} viewBox="0 0 22 22">
          <circle cx={11} cy={11} r={10.5} fill="#ffffff" />
          <path d="M11 1A10 10 0 0 1 21 11L16 10A5 5 0 0 0 11 5Z" fill="#f7c600" />
          <path d="M21 11A10 10 0 0 1 11 21L10 17A6 6 0 0 0 17 11Z" fill="#1faad3" />
          <path d="M11 21A10 10 0 0 1 1 11L5 11A6 6 0 0 0 11 17Z" fill="#2d6e9e" />
          <path d="M1 11A10 10 0 0 1 11 1L10 5A6 6 0 0 0 5 11Z" fill="#e0337f" />
        </svg>
      </TaskSlot>
      <TaskSlot line className="w-[48px] ml-px">
        <svg width={22} height={22} viewBox="0 0 22 22">
          <circle cx={11} cy={11} r={11} fill="#fbc116" />
          <path d="M11 0A11 11 0 0 1 20.5 5.5H11A5.5 5.5 0 0 0 6 8.5L2 3.5A11 11 0 0 1 11 0Z" fill="#df3f32" />
          <path d="M2 3.5L6.5 11A5 5 0 0 0 11 16.5L8 21.5A11 11 0 0 1 2 3.5Z" fill="#2fa04e" />
          <circle cx={11} cy={11} r={5} fill="#ffffff" />
          <circle cx={11} cy={11} r={4} fill="#4a80ee" />
        </svg>
      </TaskSlot>
      <TaskSlot line active className="w-[44px] ml-px">
        <div className="w-[22px] h-[22px] bg-[#eef2f5] flex items-center justify-center"><TableauMark size={18} mono="#5c9bc6" /></div>
      </TaskSlot>
      <TaskSlot line className="w-[48px] ml-[5px]">
        <svg width={20} height={25} viewBox="0 0 20 25">
          <defs>
            <linearGradient id="dropA" x1="0" y1="0" x2="0" y2="1"><stop offset="0" stopColor="#f5a14a" /><stop offset="0.4" stopColor="#c45bc9" /><stop offset="1" stopColor="#3a9be8" /></linearGradient>
          </defs>
          <path d="M11 0C12 5 20 9 20 16A9.5 9 0 0 1 0 16C0 10 8 6 11 0Z" fill="url(#dropA)" />
        </svg>
      </TaskSlot>
      <div className="ml-auto h-full flex items-center text-[#f4f4f4]">
        <ChevronUp size={16} strokeWidth={1.3} />
        <svg width={17} height={14} viewBox="0 0 17 14" className="ml-[8px]">
          <ellipse cx={7} cy={7} rx={7} ry={5} fill="#cfcfcf" />
          <circle cx={12} cy={9.5} r={4.5} fill="#2a88dd" />
          <path d="M10 9.5A2 2 0 0 1 14 9.5" stroke="#ffffff" fill="none" />
        </svg>
        <svg width={16} height={12} viewBox="0 0 16 12" fill="none" stroke="#f4f4f4" className="ml-[7px]">
          <path d="M4.5 3.5H15.5V10.5H4.5Z" />
          <path d="M6 5H13V9H6Z" fill="#f4f4f4" stroke="none" />
          <path d="M2 0V3M4 0V3M1 3H5V5H1ZM3 5V9" />
        </svg>
        <svg width={14} height={13} viewBox="0 0 14 13" fill="none" stroke="#d8d8d8" className="ml-[10px]" strokeWidth={1}>
          <path d="M1 13A12 12 0 0 1 13 1M4 13A9 9 0 0 1 13 4M7 13A6 6 0 0 1 13 7M10 13A3 3 0 0 1 13 10" strokeDasharray="1.2 .8" />
        </svg>
        <Volume2 size={17} strokeWidth={1.1} className="ml-[6px]" />
        <div className="ml-[5px] mr-[2px] w-[66px] pt-[1px] flex flex-col items-center leading-[18px] whitespace-nowrap">
          <span className="text-[12px]">1:15 AM</span>
          <span className="text-[11.5px]">4/28/2021</span>
        </div>
        <div className="w-[50px] h-full relative flex items-center justify-center pr-[16px] pb-[2px]">
          <svg width={16} height={14} viewBox="0 0 16 14" fill="#f4f4f4"><path d="M0 0H16V11H5L2 14V11H0Z" /></svg>
          <span className="absolute left-[17px] top-[19px] w-[16px] h-[16px] rounded-full border border-[#8a8a8a] bg-[#2d2a27] text-[10px] leading-[14px] text-center font-bold">9</span>
        </div>
      </div>
    </div>
  );
}

export default function App() {
  return (
    <div className="w-[1366px] h-[768px] overflow-hidden flex flex-col bg-[#f3f3f3] font-['Lato',sans-serif]">
      <div className="h-[22px] bg-white flex items-center pl-[3px] text-[12.5px] text-[#222222] font-['Roboto',sans-serif]">
        <div className="w-[15px] h-[15px] mt-[1px] bg-[#eaf2f7] border border-[#cfd8de] flex items-center justify-center shrink-0"><TableauMark size={13} mono="#3f8bb5" /></div>
        <span className="ml-[5px] pt-[2px]">Tableau - final project dashboard</span>
        <div className="ml-auto flex items-center text-[#222222] pb-[2px]">
          <Minus size={14} strokeWidth={1} className="mr-[33px]" />
          <svg width={11} height={11} viewBox="0 0 11 11" fill="none" stroke="#222222" className="mr-[33px]"><path d="M.5 2.5H8.5V10.5H.5ZM2.5 2.5V.5H10.5V8.5H8.5" /></svg>
          <X size={15} strokeWidth={1} className="mr-[17px]" />
        </div>
      </div>
      <div className="h-[21px] bg-white flex items-center pl-[8px] pt-[1px] text-[12.5px] text-[#111111] font-['Roboto',sans-serif]">
        {menus.map((m) => (
          <span key={m.t} className={m.c}>{m.t}</span>
        ))}
      </div>
      <Toolbar />
      <div className="h-[593px] flex overflow-hidden">
        <DataPane />
        <SideCards />
        <div className="ml-[6px] w-[984px] flex flex-col gap-[6px] shrink-0">
          <Shelf label="Columns" icon={<svg width={12} height={12} viewBox="0 0 12 12" fill="#666666"><path d="M0 0H2.5V2H0ZM4.5 0H7V2H4.5ZM9 0H11.5V2H9ZM0 3.5H2.5V12H0ZM4.5 3.5H7V12H4.5ZM9 3.5H11.5V12H9Z" /></svg>} />
          <Shelf label="Rows" icon={<svg width={12} height={12} viewBox="0 0 12 12" fill="#666666"><path d="M0 1H2V3H0ZM3.5 1H12V3H3.5ZM0 5H2V7H0ZM3.5 5H12V7H3.5ZM0 9H2V11H0ZM3.5 9H12V11H3.5Z" /></svg>} />
          <div className="flex">
            <Viz />
            <RightCards />
          </div>
        </div>
      </div>
      <TabBar />
      <StatusBar />
      <TaskBar />
    </div>
  );
}
